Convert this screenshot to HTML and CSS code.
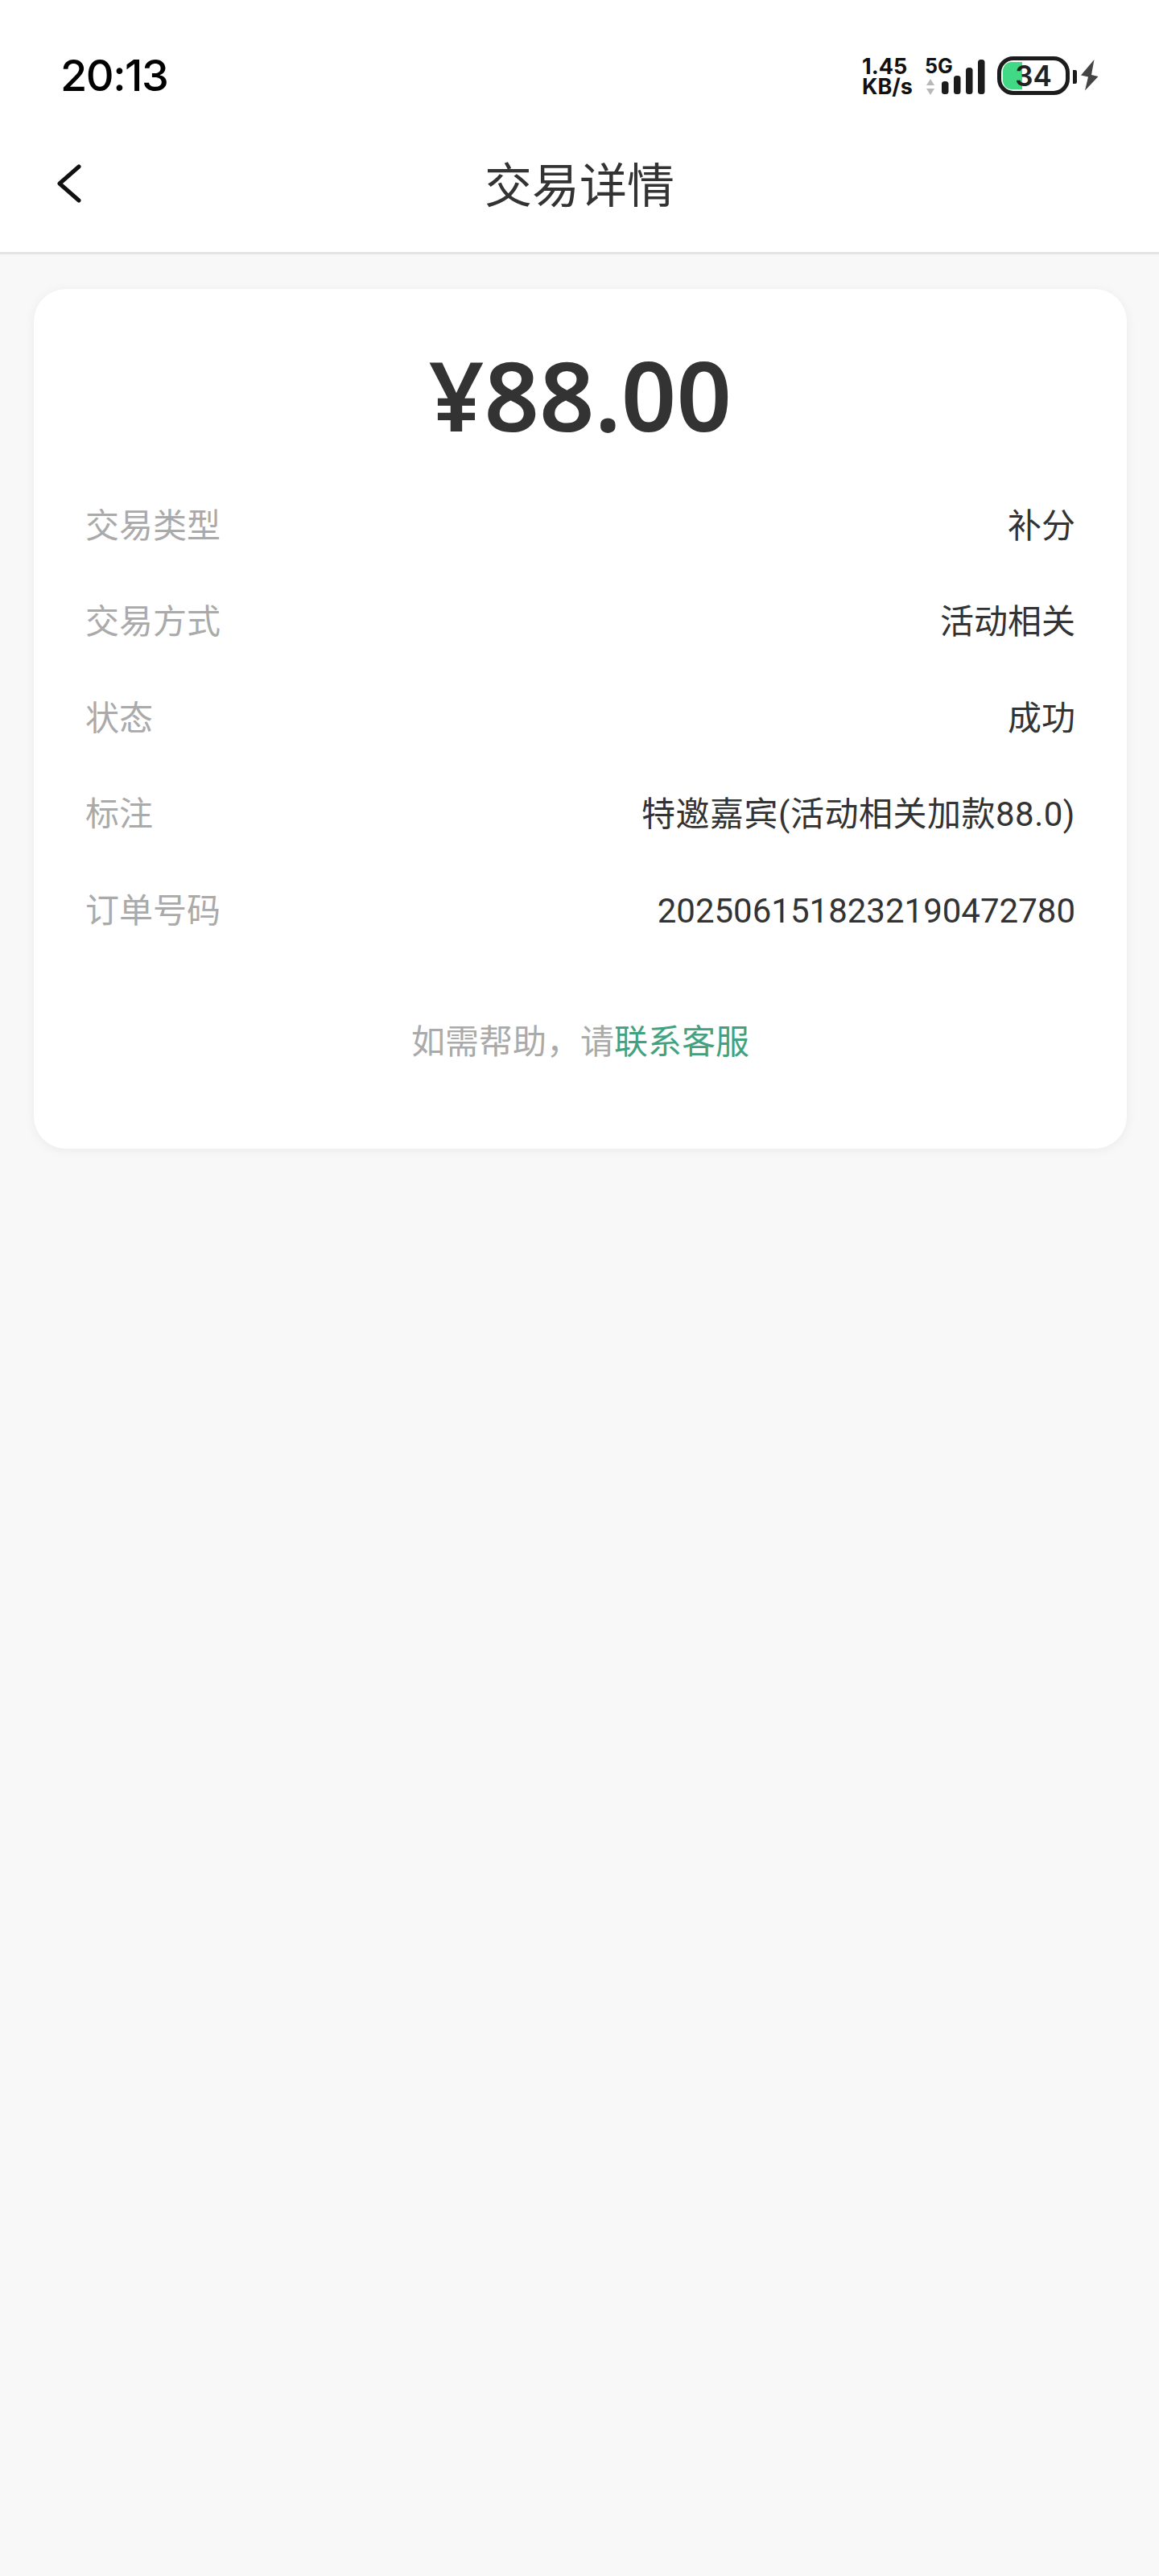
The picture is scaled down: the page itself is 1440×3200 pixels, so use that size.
FILE: index.html
```html
<!DOCTYPE html>
<html lang="zh-CN">
<head>
  <meta charset="UTF-8">
  <title>交易详情</title>
  <link rel="stylesheet" href="styles.css">
</head>
<body>

  <div class="topbar">
    <div class="status">
      <span class="time">20:13</span>
      <div class="status-right">
        <div class="speed">1.45<br>KB/s</div>
        <div class="net">
          <span class="net-label">5G</span>
          <svg class="net-arrows" width="10" height="20" viewBox="0 0 10 20"><path d="M5 0L10 8H0Z M5 20L0 12H10Z" fill="#b8b8b8"/></svg>
        </div>
        <svg class="bars" width="54" height="44" viewBox="0 0 54 44" fill="#1c1c1c">
          <rect x="0" y="27" width="8.5" height="16" rx="3.5"/>
          <rect x="15" y="20" width="8.5" height="23" rx="3.5"/>
          <rect x="30" y="10" width="8.5" height="33" rx="3.5"/>
          <rect x="45" y="0" width="8.5" height="43" rx="3.5"/>
        </svg>
        <div class="battery">
          <div class="battery-fill"></div>
          <span class="battery-num">34</span>
        </div>
        <div class="battery-nub"></div>
        <svg class="bolt" width="22" height="39" viewBox="0 0 22 39"><path d="M16.5 0L0 19.5L9 21.5L5 38.5L21.5 21L13 19Z" fill="#444"/></svg>
      </div>
    </div>

    <div class="navbar">
      <svg class="back" width="30" height="50" viewBox="0 0 30 50"><path d="M27 3L3 24L27 45" fill="none" stroke="#111" stroke-width="5" stroke-linecap="round" stroke-linejoin="round"/></svg>
      <h1 class="title">交易详情</h1>
    </div>
  </div>

  <div class="card">
    <div class="amount">¥88.00</div>

    <div class="row"><span class="label">交易类型</span><span class="value">补分</span></div>
    <div class="row"><span class="label">交易方式</span><span class="value">活动相关</span></div>
    <div class="row"><span class="label">状态</span><span class="value">成功</span></div>
    <div class="row"><span class="label">标注</span><span class="value value-note">特邀嘉宾(活动相关加款88.0)</span></div>
    <div class="row"><span class="label">订单号码</span><span class="value">2025061518232190472780</span></div>

    <p class="help">如需帮助，请<a class="help-link" href="#">联系客服</a></p>
  </div>

</body>
</html>
```

FILE: styles.css
```css
body {
  margin: 0;
  min-height: 3200px;
  background: #f8f8f8;
  font-family: Roboto, "Noto Sans CJK SC", sans-serif;
}

.topbar {
  height: 313px;
  background: #fff;
  border-bottom: 3px solid #e4e4e4;
}

.status {
  height: 156px;
  padding: 0 75px 0 75px;
  display: flex;
  justify-content: space-between;
  align-items: flex-start;
}

.time {
  margin-top: 66px;
  font-family: Inter, sans-serif;
  font-size: 54px;
  line-height: 56px;
  font-weight: 500;
  color: #000;
  letter-spacing: -1.5px;
}

.status-right {
  margin-top: 70px;
  display: flex;
  align-items: flex-start;
}

.speed {
  width: 78px;
  font-family: Inter, sans-serif;
  font-size: 27px;
  line-height: 25px;
  font-weight: 700;
  color: #111;
}

.net {
  width: 21px;
  display: flex;
  flex-direction: column;
}

.net-label {
  font-family: Inter, sans-serif;
  font-size: 25px;
  line-height: 25px;
  font-weight: 700;
  color: #111;
}

.net-arrows {
  margin: 3px 0 0 2px;
}

.bars {
  margin: 4px 0 0 0;
}

.battery {
  position: relative;
  width: 90px;
  height: 48px;
  margin-left: 15px;
  box-sizing: border-box;
  border: 5px solid #1c1c1c;
  border-radius: 20px;
  display: flex;
  align-items: center;
  justify-content: center;
  overflow: hidden;
}

.battery-fill {
  position: absolute;
  left: 2px;
  top: 2px;
  bottom: 2px;
  width: 24px;
  background: #41d984;
  border-radius: 11px 0 0 11px;
}

.battery-num {
  position: relative;
  font-family: Inter, sans-serif;
  font-size: 35px;
  font-weight: 600;
  color: #222;
}

.battery-nub {
  width: 5px;
  height: 17px;
  margin: 17px 0 0 4px;
  background: #1c1c1c;
  border-radius: 0 2px 2px 0;
}

.bolt {
  margin: 4px 0 0 5px;
}

.navbar {
  position: relative;
  height: 157px;
  box-sizing: border-box;
  padding-bottom: 16px;
  display: flex;
  align-items: center;
  justify-content: center;
}

.back {
  position: absolute;
  left: 71px;
  top: 48px;
}

.title {
  margin: 0;
  font-size: 59px;
  font-weight: 400;
  color: #333;
}

.card {
  margin: 43px 40px 0 42px;
  height: 1068px;
  box-sizing: border-box;
  padding: 0 64px;
  background: #fff;
  border-radius: 40px;
  box-shadow: 0 2px 14px rgba(0, 0, 0, 0.06);
}

.amount {
  padding-top: 64px;
  text-align: center;
  font-family: "Noto Sans", sans-serif;
  font-size: 120px;
  line-height: 134px;
  font-weight: 600;
  color: #333;
  margin-bottom: 37px;
}

.row {
  height: 119.5px;
  display: flex;
  justify-content: space-between;
  align-items: center;
  font-size: 42px;
  line-height: 56px;
}

.label {
  color: #aaa;
}

.value {
  color: #333;
}

.value-note {
  letter-spacing: 0.5px;
}

.help {
  margin: 68px 0 0;
  text-align: center;
  font-size: 42px;
  color: #aaa;
}

.help-link {
  color: #42a280;
  text-decoration: none;
}
```
